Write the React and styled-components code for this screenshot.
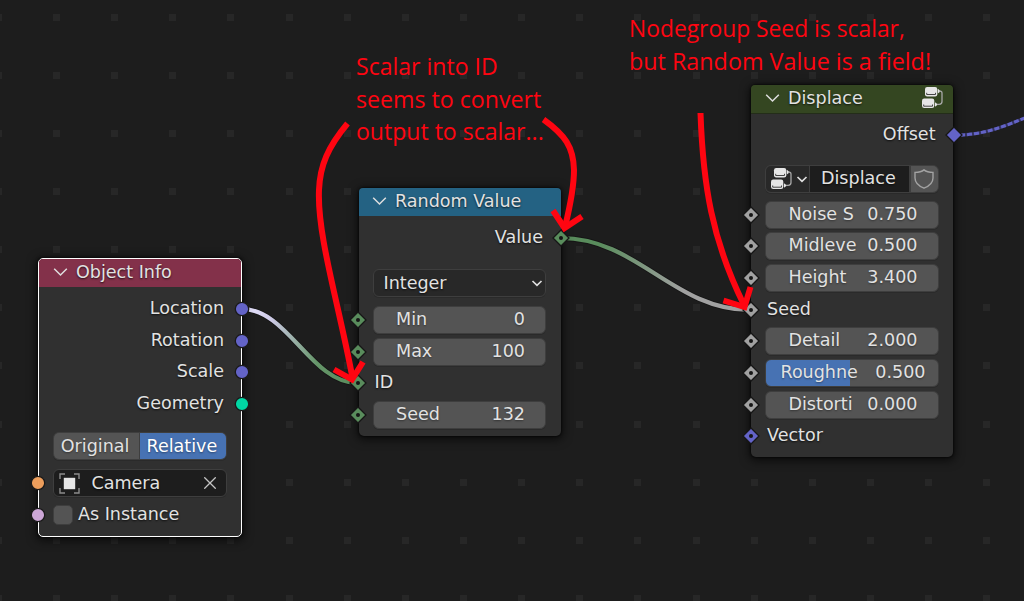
import React from "react";
import styled, { createGlobalStyle, css } from "styled-components";

const GlobalStyle = createGlobalStyle`
  * { box-sizing: border-box; }
  body { margin: 0; background: #1d1d1d; overflow: hidden; }
`;

const Canvas = styled.main`
  position: relative;
  width: 1024px;
  height: 601px;
  overflow: hidden;
  background: #1d1d1d;
  color: #e2e2e2;
  font-family: "DejaVu Sans", sans-serif;
  font-size: 17.55px;
  line-height: 20px;
`;

const Layer = styled.svg`
  position: absolute;
  inset: 0;
  pointer-events: none;
`;

const NodeFrame = styled.section`
  position: absolute;
  left: ${(p) => p.$x}px;
  top: ${(p) => p.$y}px;
  width: ${(p) => p.$w}px;
  height: ${(p) => p.$h}px;
  display: flex;
  flex-direction: column;
  border-radius: 5px;
  background: #303030;
  box-shadow: 0 2px 10px 2px rgba(0, 0, 0, 0.6), 0 0 2px 1px rgba(0, 0, 0, 0.5);
  text-shadow: 0 1px 2px rgba(0, 0, 0, 0.75);
  ${(p) =>
    p.$selected &&
    css`
      border: 1.4px solid #fff;
    `}
`;

const Header = styled.header`
  flex: none;
  display: flex;
  align-items: center;
  gap: 8px;
  height: ${(p) => p.$h || 28}px;
  padding: 0 10px 2px ${(p) => p.$pad || 14}px;
  border-radius: 4px 4px 0 0;
  background: ${(p) => p.$color};
  border-bottom: 1px solid ${(p) => p.$line || p.$color};
`;

const Title = styled.span`
  flex: 1;
  white-space: nowrap;
`;

const Body = styled.div`
  display: flex;
  flex-direction: column;
  padding-top: ${(p) => p.$top || 6.5}px;
  margin: 0 ${(p) => p.$inset || 0}px;
`;

const Row = styled.div`
  position: relative;
  display: flex;
  align-items: center;
  height: 31.67px;
  padding: 0 14.5px 0 14px;
`;

const Label = styled.span`
  flex: 1;
  padding: 0 ${(p) => (p.$right ? 3 : 0)}px 2px 2px;
  text-align: ${(p) => (p.$right ? "right" : "left")};
`;

const Spacer = styled.div`
  height: ${(p) => p.$h}px;
`;

const box = css`
  display: flex;
  align-items: center;
  width: 174px;
  height: 28px;
  border: 1.6px solid #3e3e3e;
  border-radius: 6px;
  overflow: hidden;
  box-shadow: 0 1px 0 #2a2a2a;
`;

const NumberField = styled.div`
  ${box}
  width: 173.5px;
  justify-content: space-between;
  background: ${(p) =>
    p.$fill ? `linear-gradient(90deg, #4772b3 ${p.$fill}%, #545454 ${p.$fill}%)` : "#545454"};
  padding: 0 ${(p) => (p.$fill ? 12 : 20)}px 2px ${(p) => (p.$fill ? 14.5 : 22.5)}px;
  text-shadow: 0 1px 2px rgba(0, 0, 0, 0.4);
`;

const Dropdown = styled.div`
  ${box}
  justify-content: space-between;
  background: #282828;
  padding: 0 2px 1px 10px;
`;

const ObjectField = styled.div`
  ${box}
  background: #1d1d1d;
  padding: 0 10px 0 5px;
`;

const ObjectName = styled.span`
  flex: 1;
  padding: 0 0 1px 12px;
`;

const Segments = styled.div`
  ${box}
  background: #3e3e3e;
  gap: 1.5px;
`;

const Segment = styled.button`
  flex: 1;
  height: 100%;
  border: 0;
  padding: 0 2px 1px 0;
  font: inherit;
  color: ${(p) => (p.$on ? "#fff" : "#e2e2e2")};
  background: ${(p) => (p.$on ? "#4772b3" : "#545454")};
  text-shadow: 0 1px 2px rgba(0, 0, 0, 0.4);
`;

const Checkbox = styled.span`
  width: 20.5px;
  height: 20.5px;
  border: 1.6px solid #3e3e3e;
  border-radius: 5px;
  background: #545454;
`;

const CheckLabel = styled.span`
  padding: 0 0 3px 5px;
`;

const GroupPicker = styled.div`
  ${box}
  background: #3e3e3e;
  gap: 1.5px;
`;

const PickerButton = styled.div`
  display: flex;
  align-items: center;
  gap: 4px;
  width: 42.5px;
  height: 100%;
  padding-left: 5px;
  background: #282828;
`;

const PickerName = styled.div`
  flex: 1;
  height: 100%;
  padding: 2px 0 0 11px;
  background: #1d1d1d;
`;

const PickerShield = styled.div`
  display: flex;
  align-items: center;
  justify-content: center;
  width: 27px;
  height: 100%;
  background: #545454;
`;

const SocketMark = styled.svg`
  position: absolute;
  top: 50%;
  ${(p) => (p.$side === "out" ? "right: -8.5px;" : "left: -8.5px;")}
  transform: translateY(-50%);
  overflow: visible;
`;

const Note = styled.div`
  position: absolute;
  left: ${(p) => p.$x}px;
  top: ${(p) => p.$y}px;
  display: flex;
  flex-direction: column;
  align-items: flex-start;
  color: #ff0511;
  font-family: "Open Sans", sans-serif;
  font-size: 24px;
  line-height: 32.6px;
  white-space: pre;
`;

const NoteLine = styled.span`
  transform: scaleX(${(p) => p.$stretch});
  transform-origin: 0 0;
`;

const PURPLE = "#6363c7";
const GREEN = "#598c5c";
const GRAY = "#a1a1a1";

function Socket({ color, shape = "circle", side = "in" }) {
  return (
    <SocketMark $side={side} width="16" height="16" viewBox="-8 -8 16 16">
      {shape === "circle" ? (
        <circle r="6.7" fill={color} stroke="#1a1a1a" strokeWidth="1.3" />
      ) : (
        <path d="M0-8 8 0 0 8-8 0Z" fill={color} stroke="#161616" strokeWidth="1.3" />
      )}
      {shape === "dot" && <circle r="2" fill="#151515" />}
    </SocketMark>
  );
}

function Chevron({ small }) {
  return small ? (
    <svg width="12" height="8" viewBox="0 0 12 8">
      <path d="M1.500 2 6 6.300 10.500 2" fill="none" stroke="#dedede" strokeWidth="1.7" />
    </svg>
  ) : (
    <svg width="15" height="10" viewBox="0 0 15 10">
      <path d="M1.2 1.800 7.5 8 13.800 1.800" fill="none" stroke="#dedede" strokeWidth="1.5" />
    </svg>
  );
}

function GroupIcon() {
  return (
    <svg width="21" height="21" viewBox="0 0 21 21">
      <rect x="3" y="0" width="12.3" height="9.5" rx="2.2" fill="#e6e6e6" />
      <rect x="0" y="11.5" width="12.3" height="9.5" rx="2.2" fill="#e6e6e6" />
      <path d="M4.7 5.8v1.7h8.8V5.8M1.7 17.5v1.7h8.8v-1.7" fill="none" stroke="#333" strokeWidth="0.9" />
      <path d="M15.8 1.7 18.8 4.2 15.8 6.5ZM13 15.2 16 17.5 13 19.8Z" fill="#e6e6e6" />
      <path d="M17 4.2h1.2q1.8 0 1.8 2v8.3q0 2.8-2.8 2.8H15" fill="none" stroke="#a8a8a8" strokeWidth="1.3" />
    </svg>
  );
}

function ObjectIcon() {
  return (
    <svg width="21" height="21" viewBox="0 0 21 21">
      <rect x="4.8" y="4.8" width="11.4" height="11.4" fill="#e6e6e6" />
      <path d="M1 6V1h5M15 1h5v5M20 15v5h-5M6 20H1v-5" fill="none" stroke="#8c8c8c" strokeWidth="1.4" />
    </svg>
  );
}

function CloseIcon() {
  return (
    <svg width="12" height="12" viewBox="0 0 12 12">
      <path d="M.3.3 11.700 11.700M11.700.3.3 11.700" stroke="#c4c4c4" strokeWidth="1.3" />
    </svg>
  );
}

function ShieldIcon() {
  return (
    <svg width="20" height="20" viewBox="0 0 20 20">
      <path
        d="M10 .9Q7 3.4 1 3.4V9q0 6.5 9 10.2 9-3.7 9-10.2V3.4Q13 3.4 10 .9Z"
        fill="none"
        stroke="#a3a3a3"
        strokeWidth="1.4"
      />
    </svg>
  );
}

function Output({ label, color, shape }) {
  return (
    <Row>
      <Label $right>{label}</Label>
      <Socket side="out" color={color} shape={shape} />
    </Row>
  );
}

function Input({ label, value, color, fill }) {
  return (
    <Row>
      <Socket color={color} shape="dot" />
      {value === undefined ? (
        <Label>{label}</Label>
      ) : (
        <NumberField $fill={fill}>
          <span>{label}</span>
          <span>{value}</span>
        </NumberField>
      )}
    </Row>
  );
}

const GRID_X = Array.from({ length: 18 }, (_, i) => Math.floor(-4.7 + i * 58.15));
const GRID_Y = Array.from({ length: 11 }, (_, i) => Math.floor(14 + i * 58.15));

function Grid() {
  return (
    <Layer width="1024" height="601">
      {GRID_Y.map((y) =>
        GRID_X.map((x) => <rect key={`${x},${y}`} x={x} y={y} width="7" height="7" fill="#272727" />)
      )}
    </Layer>
  );
}

function Links() {
  return (
    <Layer width="1024" height="601" fill="none">
      <defs>
        <linearGradient id="loc" x1="242" x2="357" y1="0" y2="0" gradientUnits="userSpaceOnUse">
          <stop offset="0" stopColor="#e9e6ff" />
          <stop offset="0.25" stopColor="#cfcbe8" />
          <stop offset="0.65" stopColor="#659569" />
          <stop offset="1" stopColor={GREEN} />
        </linearGradient>
        <linearGradient id="val" x1="561" x2="750" y1="0" y2="0" gradientUnits="userSpaceOnUse">
          <stop offset="0" stopColor={GREEN} />
          <stop offset="0.2" stopColor={GREEN} />
          <stop offset="0.65" stopColor={GRAY} />
          <stop offset="1" stopColor={GRAY} />
        </linearGradient>
      </defs>
      <g stroke="#111" strokeWidth="6" opacity="0.6">
        <path d="M242 309C288 309 311 383 357 383" />
        <path d="M561 238C637 238 674 310 750 310" />
      </g>
      <path d="M242 309C288 309 311 383 357 383" stroke="url(#loc)" strokeWidth="4.2" />
      <path d="M561 238C637 238 674 310 750 310" stroke="url(#val)" strokeWidth="4.2" />
      <path d="M953 135.3C985 135.3 1005 126 1032 115" stroke="#34345f" strokeWidth="3.2" />
      <path d="M953 135.3C985 135.3 1005 126 1032 115" stroke={PURPLE} strokeWidth="3" strokeDasharray="5 2" />
    </Layer>
  );
}

function Arrows() {
  return (
    <Layer width="1024" height="601" fill="none" stroke="#ff0511" strokeWidth="6">
      <path d="M347.5 123.5C328 147 320 165 319 190C317 235 339 305 352.5 378" />
      <path d="M334 369.5 352 379.5 363 362" />
      <path d="M543.5 119.5C565 135 573.5 147 574 170Q574 190 565 227" />
      <path d="M553 210.5 564.5 228 582 216.5" />
      <path d="M700.5 113C703 185 712 240 744 305" />
      <path d="M723.5 300.5 744.5 307 750.5 287" />
    </Layer>
  );
}

export default function App() {
  return (
    <Canvas>
      <GlobalStyle />
      <Grid />
      <Links />

      <NodeFrame $x={38} $y={258} $w={204} $h={279} $selected>
        <Header $color="#83314a" $h={28} $pad={14}>
          <Chevron />
          <Title>Object Info</Title>
        </Header>
        <Body $top={6.3} $inset={-0.5}>
          <Output label="Location" color={PURPLE} />
          <Output label="Rotation" color={PURPLE} />
          <Output label="Scale" color={PURPLE} />
          <Output label="Geometry" color="#00d6a3" />
          <Spacer $h={10.5} />
          <Row>
            <Segments>
              <Segment>Original</Segment>
              <Segment $on>Relative</Segment>
            </Segments>
          </Row>
          <Spacer $h={5.5} />
          <Row>
            <Socket color="#ed9e5c" />
            <ObjectField>
              <ObjectIcon />
              <ObjectName>Camera</ObjectName>
              <CloseIcon />
            </ObjectField>
          </Row>
          <Row>
            <Socket color="#cca6d6" />
            <Checkbox />
            <CheckLabel>As Instance</CheckLabel>
          </Row>
        </Body>
      </NodeFrame>

      <NodeFrame $x={358.5} $y={188} $w={202} $h={248}>
        <Header $color="#246283" $pad={13.5}>
          <Chevron />
          <Title>Random Value</Title>
        </Header>
        <Body>
          <Output label="Value" color={GREEN} shape="dot" />
          <Spacer $h={13.4} />
          <Row>
            <Dropdown>
              <span>Integer</span>
              <Chevron small />
            </Dropdown>
          </Row>
          <Spacer $h={5} />
          <Input label="Min" value="0" color={GREEN} />
          <Input label="Max" value="100" color={GREEN} />
          <Input label="ID" color={GREEN} />
          <Input label="Seed" value="132" color={GREEN} />
        </Body>
      </NodeFrame>

      <NodeFrame $x={751} $y={85} $w={202} $h={372}>
        <Header $color="#344621" $line="#232d19" $h={28.5}>
          <Chevron />
          <Title>Displace</Title>
          <GroupIcon />
        </Header>
        <Body $top={6}>
          <Output label="Offset" color={PURPLE} shape="diamond" />
          <Spacer $h={11.6} />
          <Row>
            <GroupPicker>
              <PickerButton>
                <GroupIcon />
                <Chevron small />
              </PickerButton>
              <PickerName>Displace</PickerName>
              <PickerShield>
                <ShieldIcon />
              </PickerShield>
            </GroupPicker>
          </Row>
          <Spacer $h={4.4} />
          <Input label="Noise S" value="0.750" color={GRAY} />
          <Input label="Midleve" value="0.500" color={GRAY} />
          <Input label="Height" value="3.400" color={GRAY} />
          <Input label="Seed" color={GRAY} />
          <Input label="Detail" value="2.000" color={GRAY} />
          <Input label="Roughne" value="0.500" color={GRAY} fill={49} />
          <Input label="Distorti" value="0.000" color={GRAY} />
          <Input label="Vector" color={PURPLE} />
        </Body>
      </NodeFrame>

      <Note $x={356} $y={50}>
        <NoteLine $stretch={0.96}>Scalar into ID</NoteLine>
        <NoteLine $stretch={0.965}>seems to convert</NoteLine>
        <NoteLine $stretch={0.96}>output to scalar...</NoteLine>
      </Note>
      <Note $x={629} $y={12}>
        <NoteLine $stretch={0.951}>Nodegroup Seed is scalar,</NoteLine>
        <NoteLine $stretch={0.972}>but Random Value is a field!</NoteLine>
      </Note>
      <Arrows />
    </Canvas>
  );
}
